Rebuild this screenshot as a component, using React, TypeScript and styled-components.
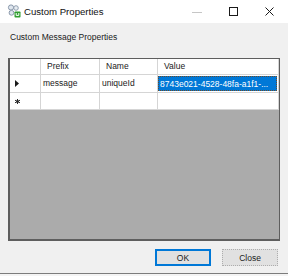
import React from 'react'
import styled, { createGlobalStyle } from 'styled-components'

const GlobalStyle = createGlobalStyle`
  html, body {
    margin: 0;
    padding: 0;
    background: #f4f4f4;
  }
  * {
    box-sizing: border-box;
  }
`

const columns = [
  { key: 'prefix', title: 'Prefix', width: 59 },
  { key: 'name', title: 'Name', width: 58 },
  { key: 'value', title: 'Value', width: 0 },
]

const rows = [
  { prefix: 'message', name: 'uniqueId', value: '8743e021-4528-48fa-a1f1-...' },
]

function AppIcon() {
  return (
    <svg width="14" height="14" viewBox="0 0 14 14">
      <circle cx="4" cy="3.5" r="2.6" fill="#dfe6ee" stroke="#7f8fa3" strokeWidth="0.9" />
      <circle cx="9" cy="4" r="2.3" fill="#e8edf2" stroke="#8796a8" strokeWidth="0.9" />
      <circle cx="4.5" cy="8.8" r="2.4" fill="#dfe6ee" stroke="#7f8fa3" strokeWidth="0.9" />
      <rect x="7.5" y="7.5" width="6" height="6" rx="0.8" fill="#2f9e2f" />
      <path d="M9.2 9 v2.4 h2.6 V9" stroke="#ffffff" strokeWidth="1" fill="none" />
    </svg>
  )
}

export default function App() {
  return (
    <>
      <GlobalStyle />
      <Window>
        <TitleBar>
          <IconSlot>
            <AppIcon />
          </IconSlot>
          <TitleText>Custom Properties</TitleText>
          <Spacer />
          <CaptionButton>
            <svg width="10" height="10" viewBox="0 0 10 10">
              <path d="M0 5.5 H10" stroke="#c6c6c6" strokeWidth="1" />
            </svg>
          </CaptionButton>
          <CaptionButton>
            <svg width="9" height="9" viewBox="0 0 9 9">
              <rect x="0.5" y="0.5" width="8" height="8" fill="none" stroke="#1a1a1a" strokeWidth="1" />
            </svg>
          </CaptionButton>
          <CaptionButton>
            <svg width="9" height="9" viewBox="0 0 9 9">
              <path d="M0.5 0.5 L8.5 8.5 M8.5 0.5 L0.5 8.5" stroke="#1a1a1a" strokeWidth="1" />
            </svg>
          </CaptionButton>
        </TitleBar>
        <Body>
          <SectionLabel>Custom Message Properties</SectionLabel>
          <GridFrame>
            <GridTable>
              <HeaderCell />
              {columns.map((c) => (
                <HeaderCell key={c.key}>{c.title}</HeaderCell>
              ))}
              {rows.map((r, i) => (
                <React.Fragment key={i}>
                  <RowHeader>
                    <svg width="4" height="7" viewBox="0 0 4 7">
                      <path d="M0 0 L4 3.5 L0 7 Z" fill="#1a1a1a" />
                    </svg>
                  </RowHeader>
                  <Cell>{r.prefix}</Cell>
                  <Cell>{r.name}</Cell>
                  <Cell $selected>
                    <SelectedText>{r.value}</SelectedText>
                  </Cell>
                </React.Fragment>
              ))}
              <RowHeader>
                <svg width="5" height="5" viewBox="0 0 5 5">
                  <path d="M2.5 0 V5 M0 1.2 L5 3.8 M5 1.2 L0 3.8" stroke="#2a2a2a" strokeWidth="1" />
                  <circle cx="2.5" cy="2.5" r="1.2" fill="#2a2a2a" />
                </svg>
              </RowHeader>
              <Cell />
              <Cell />
              <Cell />
            </GridTable>
          </GridFrame>
          <ButtonRow>
            <DialogButton $default>OK</DialogButton>
            <DialogButton>Close</DialogButton>
          </ButtonRow>
        </Body>
      </Window>
    </>
  )
}

const Window = styled.div`
  width: 288px;
  height: 274px;
  display: flex;
  flex-direction: column;
  background: #f0f0f0;
  border-bottom: 1px solid #7c7c7c;
  font-family: 'Liberation Sans', Arial, sans-serif;
  color: #1a1a1a;
`

const TitleBar = styled.div`
  height: 23px;
  display: flex;
  align-items: center;
  background: #ffffff;
  padding-right: 1px;
`

const IconSlot = styled.div`
  width: 14px;
  height: 14px;
  margin-left: 7px;
  margin-top: -1px;
  display: flex;
`

const TitleText = styled.div`
  margin-left: 3px;
  font-size: 9.6px;
  color: #111;
  margin-top: -1px;
`

const Spacer = styled.div`
  flex: 1;
`

const CaptionButton = styled.div`
  width: 36px;
  height: 23px;
  display: flex;
  align-items: center;
  justify-content: center;
`

const Body = styled.div`
  flex: 1;
  display: flex;
  flex-direction: column;
  padding: 0 8px;
`

const SectionLabel = styled.div`
  margin-top: 9px;
  margin-left: 2px;
  height: 11px;
  line-height: 11px;
  font-size: 8.5px;
`

const GridFrame = styled.div`
  margin-top: 15px;
  height: 183px;
  border: 1px solid #5e5e5e;
  border-left-width: 2px;
  border-bottom-width: 2px;
  background: #ababab;
`

const GridTable = styled.div`
  display: grid;
  grid-template-columns: 31px 59px 58px 1fr;
  grid-template-rows: 16px 18px 17px;
  background: #ababab;
`

const HeaderCell = styled.div`
  background: #ffffff;
  border-right: 1px solid #d5d5d5;
  border-bottom: 1px solid #d5d5d5;
  font-size: 8.5px;
  line-height: 15px;
  padding-left: 6px;
  white-space: nowrap;
  overflow: hidden;
  &:last-child {
    border-right: none;
  }
`

const RowHeader = styled.div`
  background: #ffffff;
  border-right: 1px solid #d5d5d5;
  border-bottom: 1px solid #d5d5d5;
  display: flex;
  align-items: center;
  padding-left: 5px;
`

const Cell = styled.div<{ $selected?: boolean }>`
  background: #ffffff;
  border-right: 1px solid #d5d5d5;
  border-bottom: 1px solid #d5d5d5;
  font-size: 8.5px;
  line-height: 16px;
  padding-left: 2px;
  white-space: nowrap;
  overflow: hidden;
  display: flex;
  align-items: stretch;
  ${(p) => (p.$selected ? 'padding: 1px 1px 1px 0;' : '')}
`

const SelectedText = styled.div`
  flex: 1;
  background: #0078d7;
  color: #ffffff;
  border: 1px dotted #6a4a2a;
  line-height: 14px;
  padding-left: 1px;
  white-space: nowrap;
  overflow: hidden;
`

const ButtonRow = styled.div`
  margin-top: 8px;
  display: flex;
  justify-content: flex-end;
  gap: 11px;
  padding-right: 2px;
`

const DialogButton = styled.div<{ $default?: boolean }>`
  width: 56px;
  height: 17px;
  display: flex;
  align-items: center;
  justify-content: center;
  background: #e1e1e1;
  font-size: 8.5px;
  border: ${(p) => (p.$default ? '1px solid #0078d7' : '1px dotted #adadad')};
  box-shadow: ${(p) => (p.$default ? 'inset 0 0 0 1px #0078d7' : 'none')};
`
